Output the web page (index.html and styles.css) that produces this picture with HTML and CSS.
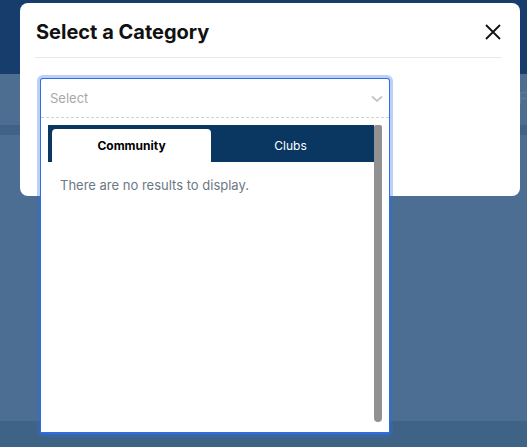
FILE: index.html
```html
<!DOCTYPE html>
<html>
<head>
<meta charset="utf-8">
<link rel="stylesheet" href="styles.css">
</head>
<body>
<div class="page">
  <div class="bg-header"></div>
  <div class="bg-subbar"><span class="bg-text">F</span></div>
  <div class="bg-stripe"></div>
  <div class="bg-content"></div>
  <div class="bg-footer"></div>
</div>
<div class="modal">
  <div class="modal-head">
    <h1 class="modal-title">Select a Category</h1>
    <button class="close" aria-label="Close">
      <svg width="16" height="16" viewBox="0 0 16 16"><path d="M1 1L15 15M15 1L1 15" stroke="#111" stroke-width="1.8" fill="none"/></svg>
    </button>
  </div>
  <div class="modal-body"></div>
</div>
<div class="select">
  <div class="select-control">
    <span class="placeholder">Select</span>
    <svg class="chev" width="12" height="8" viewBox="0 0 12 8"><path d="M1 1.5L6 6L11 1.5" stroke="#c8c8c8" stroke-width="2" fill="none"/></svg>
  </div>
  <div class="menu">
    <div class="menu-main">
      <div class="tabs">
        <div class="tab active">Community</div>
        <div class="tab">Clubs</div>
      </div>
      <div class="empty">There are no results to display.</div>
    </div>
    <div class="scrollbar"></div>
  </div>
</div>
</body>
</html>
```
FILE: styles.css
```css
* { box-sizing: border-box; }
html, body { margin: 0; padding: 0; }
body {
  width: 527px;
  height: 447px;
  overflow: hidden;
  font-family: Inter, "Liberation Sans", sans-serif;
  position: relative;
}
.page { display: flex; flex-direction: column; height: 447px; }
.bg-header { height: 74px; background: #163d6c; }
.bg-subbar { height: 51px; background: #4d6e91; position: relative; }
.bg-text { position: absolute; left: 518px; top: 14px; color: #5f7c9c; font-size: 16px; }
.bg-stripe { height: 10px; background: #3f6286; }
.bg-content { height: 286px; background: #4b6e92; }
.bg-footer { flex: 1; background: #3f6385; }

.modal {
  position: absolute;
  left: 20px;
  top: 3px;
  width: 500px;
  height: 193px;
  background: #fff;
  border-radius: 8px;
  padding: 0 18px 0 15px;
}
.modal-head {
  display: flex;
  align-items: center;
  justify-content: space-between;
  height: 55px;
  border-bottom: 1px solid #e9e9e9;
  padding-top: 3px;
}
.modal-title {
  margin: 0 0 0 1px;
  font-size: 20px;
  font-weight: 700;
  color: #111;
}
.close {
  border: 0;
  background: none;
  padding: 0;
  width: 16px;
  height: 16px;
  margin-right: 1px;
  display: block;
}
.close svg { display: block; }

.select {
  position: absolute;
  left: 40px;
  top: 78px;
  width: 350px;
  height: 356px;
  background: #fff;
  border: 1px solid #2e6ee0;
  border-bottom-width: 2px;
  border-radius: 3px 3px 2px 2px;
  box-shadow: 0 0 0 3px rgba(46, 110, 224, 0.32);
  display: flex;
  flex-direction: column;
}
.select-control {
  height: 39px;
  border-bottom: 1px dashed #d2d2d2;
  display: flex;
  align-items: center;
  justify-content: space-between;
  padding: 0 6px 0 9px;
}
.placeholder { color: #a8a8a8; font-size: 13px; margin-top: -1px; }
.chev { margin-top: 1px; }
.menu {
  flex: 1;
  display: flex;
  padding: 7px 7px 10px 7px;
}
.menu-main { flex: 1; display: flex; flex-direction: column; }
.tabs {
  display: flex;
  height: 37px;
  background: #0a3761;
  padding: 4px 0 0 4px;
}
.tab {
  width: 159px;
  display: flex;
  align-items: center;
  justify-content: center;
  font-size: 12px;
  color: #fff;
  padding-bottom: 1px;
}
.tab.active {
  background: #fff;
  color: #000;
  font-weight: 700;
  border-radius: 4px 4px 0 0;
}
.tab + .tab { flex: 1; padding-right: 4px; }
.empty {
  padding: 15px 0 0 12px;
  font-size: 13px;
  color: #6d7786;
}
.scrollbar {
  width: 8px;
  background: #919191;
  border-radius: 2px 2px 4px 4px;
}
```
